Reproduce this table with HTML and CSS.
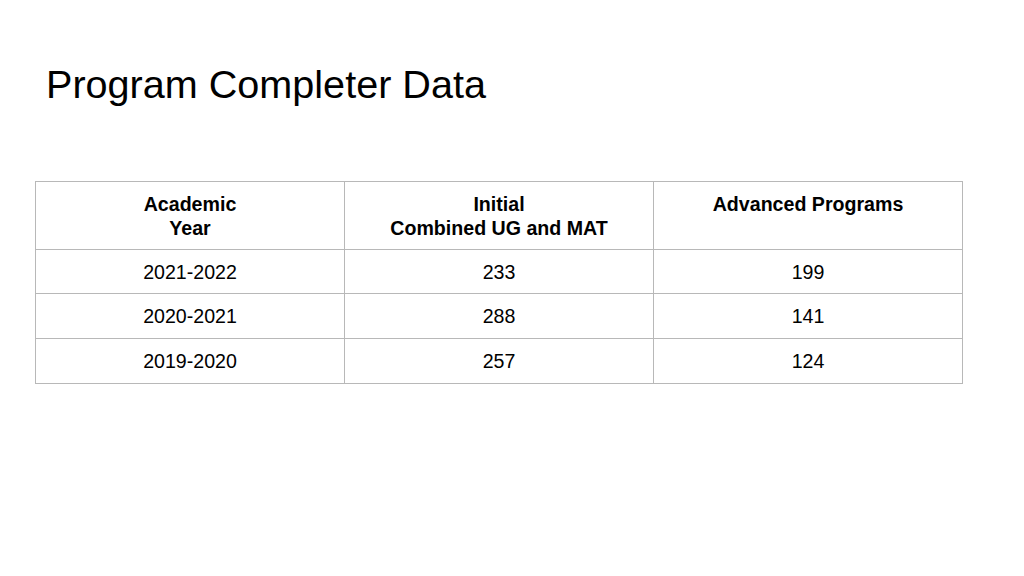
FILE: index.html
```html
<!DOCTYPE html>
<html>
<head>
<meta charset="utf-8">
<link rel="stylesheet" href="styles.css">
</head>
<body>
<div class="slide">
  <h1 class="title">Program Completer Data</h1>
  <table class="data">
    <thead>
      <tr>
        <th>Academic<br>Year</th>
        <th>Initial<br>Combined UG and MAT</th>
        <th>Advanced Programs</th>
      </tr>
    </thead>
    <tbody>
      <tr class="first"><td>2021-2022</td><td>233</td><td>199</td></tr>
      <tr><td>2020-2021</td><td>288</td><td>141</td></tr>
      <tr><td>2019-2020</td><td>257</td><td>124</td></tr>
    </tbody>
  </table>
</div>
</body>
</html>
```
FILE: styles.css
```css
html, body {
  margin: 0;
  padding: 0;
  background: #ffffff;
}
.slide {
  width: 1024px;
  height: 576px;
  padding: 61px 0 0 35px;
  box-sizing: border-box;
  font-family: "Liberation Sans", Arial, sans-serif;
  color: #000;
}
.title {
  margin: 0 0 74px 11px;
  font-size: 39.6px;
  font-weight: normal;
  line-height: 46px;
}
.data {
  border-collapse: collapse;
  width: 928px;
  table-layout: fixed;
  font-size: 19.6px;
  line-height: 24px;
}
.data th, .data td {
  border: 1px solid #b8b8b8;
  text-align: center;
  padding: 0;
}
.data th {
  font-weight: bold;
  vertical-align: top;
  height: 68px;
  padding-top: 10px;
  box-sizing: border-box;
}
.data td {
  height: 44px;
  vertical-align: middle;
}
.data .first td {
  height: 43px;
}
```
